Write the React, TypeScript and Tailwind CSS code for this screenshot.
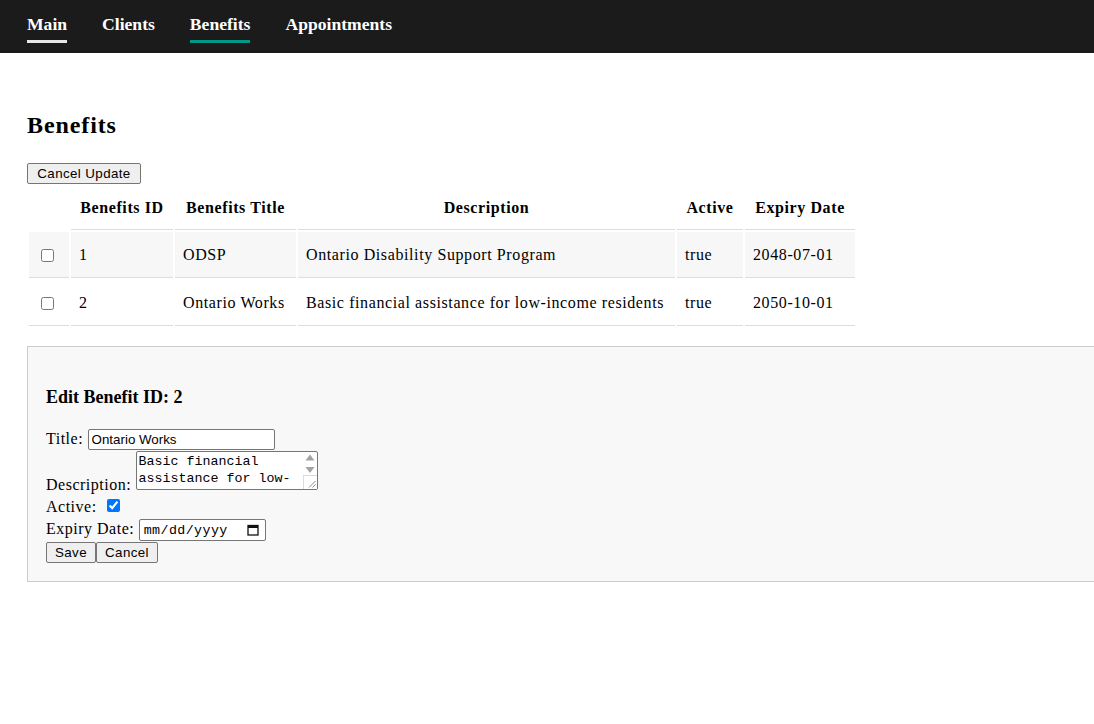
import React from 'react';

const navLinks = [
  { label: 'Main', bar: 'border-[#e8e8e8]' },
  { label: 'Clients', bar: 'border-transparent' },
  { label: 'Benefits', bar: 'border-[#009688]' },
  { label: 'Appointments', bar: 'border-transparent' },
];

const benefits = [
  { id: 1, title: 'ODSP', description: 'Ontario Disability Support Program', active: 'true', expiry: '2048-07-01' },
  { id: 2, title: 'Ontario Works', description: 'Basic financial assistance for low-income residents', active: 'true', expiry: '2050-10-01' },
];

const btn =
  "h-[21px] border border-[#767676] bg-[#efefef] rounded-[2px] text-[13.33px] font-['Liberation_Sans',Arial,sans-serif] tracking-[0.4px] text-black";

function Nav() {
  return (
    <nav className="h-[53px] bg-[#1b1b1b] flex items-start gap-[35px] pl-[27px]">
      {navLinks.map(({ label, bar }) => (
        <a
          key={label}
          href="#"
          className={`mt-[14px] pb-[5px] border-b-[3px] ${bar} text-white font-bold text-[17.6px]`}
        >
          {label}
        </a>
      ))}
    </nav>
  );
}

function BenefitsTable() {
  const th = 'h-[44px] px-2 border-b border-[#ddd] font-bold text-center align-middle';
  const td = 'h-[46px] pl-2 border-b border-[#ddd] align-middle whitespace-nowrap';
  return (
    <table className="table-fixed w-[830px] border-separate border-spacing-[2px] tracking-[0.6px]">
      <colgroup>
        <col className="w-[40px]" />
        <col className="w-[102px]" />
        <col className="w-[121px]" />
        <col className="w-[377px]" />
        <col className="w-[66px]" />
        <col className="w-[110px]" />
      </colgroup>
      <thead>
        <tr>
          <th className="h-[44px]"></th>
          <th className={th}>Benefits ID</th>
          <th className={th}>Benefits Title</th>
          <th className={th}>Description</th>
          <th className={th}>Active</th>
          <th className={th}>Expiry Date</th>
        </tr>
      </thead>
      <tbody>
        {benefits.map((b, i) => {
          const bg = i === 0 ? 'bg-[#f7f7f7]' : 'bg-white';
          return (
            <tr key={b.id}>
              <td className={`${td} ${bg} !pl-[12px]`}>
                <input type="checkbox" className="align-middle" />
              </td>
              <td className={`${td} ${bg}`}>{b.id}</td>
              <td className={`${td} ${bg}`}>{b.title}</td>
              <td className={`${td} ${bg}`}>{b.description}</td>
              <td className={`${td} ${bg}`}>{b.active}</td>
              <td className={`${td} ${bg}`}>{b.expiry}</td>
            </tr>
          );
        })}
      </tbody>
    </table>
  );
}

function EditForm() {
  return (
    <div className="mt-[18px] bg-[#f8f8f8] border-y border-l border-[#ccc] pt-[18px] pb-[18px] pl-[18px]">
      <h3 className="text-[18px] font-bold leading-[22px] mt-[21px] mb-[21px]">Edit Benefit ID: 2</h3>
      <div className="tracking-[0.5px]">
        Title:{' '}
        <input
          defaultValue="Ontario Works"
          className="w-[187px] h-[21px] px-[3px] bg-white border border-[#767676] rounded-[2px] text-[13.33px] tracking-normal font-['Liberation_Sans',Arial,sans-serif] align-baseline"
        />
      </div>
      <div className="mt-[1px] tracking-[0.5px]">
        Description:{' '}
        <span className="relative inline-block align-baseline overflow-hidden w-[182px] h-[39px] bg-white border border-[#767676] rounded-[2px]">
          <textarea
            readOnly
            value="Basic financial assistance for low-income residents"
            className="block w-full h-full resize-none overflow-hidden pl-[2px] pr-[17px] pt-[2px] text-[13.33px] leading-[16.7px] tracking-normal font-['Liberation_Mono','Courier_New',monospace] outline-none"
          />
          <svg className="absolute right-[2px] top-[2px]" width="10" height="20" viewBox="0 0 10 20">
            <polygon points="5,0.5 9.5,6.5 0.5,6.5" fill="#a3a3a3" />
            <polygon points="0.5,13 9.5,13 5,19" fill="#a3a3a3" />
          </svg>
          <span className="absolute right-0 bottom-0 w-[14px] h-[14px] bg-white border-l border-t border-[#dcdcdc]">
            <svg className="absolute right-[1px] bottom-[1px]" width="8" height="8" viewBox="0 0 8 8">
              <line x1="7.5" y1="1" x2="1" y2="7.5" stroke="#8a8a8a" strokeWidth="1" />
              <line x1="7.5" y1="4.5" x2="4.5" y2="7.5" stroke="#8a8a8a" strokeWidth="1" />
            </svg>
          </span>
        </span>
      </div>
      <div className="mt-[4px] tracking-[0.5px]">
        Active: <input type="checkbox" defaultChecked className="ml-[6px]" />
      </div>
      <div className="mt-[3px] tracking-[0.5px]">
        Expiry Date:{' '}
        <span className="inline-flex items-center justify-between w-[127px] h-[22px] pl-[4px] pr-[6px] bg-white border border-[#767676] rounded-[2px] tracking-normal text-[13.33px] font-['Liberation_Mono','Courier_New',monospace]">
          <span className="tracking-[0.4px]">mm/dd/yyyy</span>
          <svg width="12" height="12" viewBox="0 0 12 12">
            <rect x="1" y="1.5" width="10" height="9.5" fill="none" stroke="#111" strokeWidth="1.3" />
            <rect x="1" y="1.5" width="10" height="2.5" fill="#111" />
          </svg>
        </span>
      </div>
      <div className="flex mt-[1px]">
        <button className={`${btn} w-[50px]`}>Save</button>
        <button className={`${btn} w-[62px]`}>Cancel</button>
      </div>
    </div>
  );
}

export default function App() {
  return (
    <div className="min-h-[724px] bg-white text-black text-[16px] leading-[normal] font-['Liberation_Serif','Times_New_Roman',serif] overflow-hidden">
      <Nav />
      <main className="pl-[27px]">
        <h2 className="mt-[58px] mb-[24px] text-[24px] leading-[28px] font-bold tracking-[0.9px]">Benefits</h2>
        <button className={`${btn} block w-[114px]`}>Cancel Update</button>
        <BenefitsTable />
        <EditForm />
      </main>
    </div>
  );
}
